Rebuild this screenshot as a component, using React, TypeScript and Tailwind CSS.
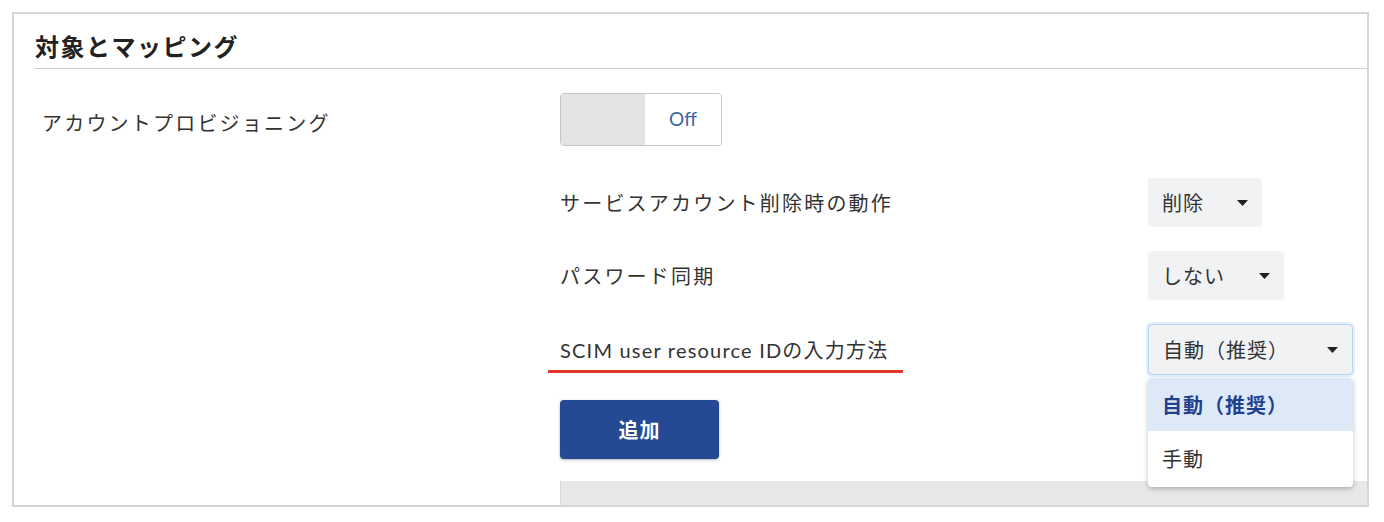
const jp = { fontFamily: '"Lato", "Noto Sans CJK JP", sans-serif' };

function Caret() {
  return (
    <svg width="11" height="6" viewBox="0 0 11 6" className="shrink-0">
      <path d="M0 0h11L5.5 6z" fill="#222" />
    </svg>
  );
}

function Select({ value, width, focused }: { value: string; width: string; focused?: boolean }) {
  return (
    <div
      className={`flex items-center justify-between rounded-[4px] bg-[#f1f2f4] pl-[14px] pr-[14px] text-[20px] tracking-[1px] text-[#333] ${width} ${
        focused ? "h-[51px] border border-[#b5d4f4] shadow-[0_0_0_2px_#e3effc]" : "h-[49px]"
      }`}
    >
      <span>{value}</span>
      <Caret />
    </div>
  );
}

export default function App() {
  return (
    <div className="h-[522px] w-[1384px] bg-white pl-[12px] pr-[15px] pt-[12px]" style={jp}>
      <div className="flex h-[495px] flex-col overflow-hidden border-2 border-[#d6d6d6]">
        <div className="ml-[21px] border-b border-[#c9ced8] pb-[6px] pt-[18px]">
          <h2 className="text-[24px] font-bold leading-[30px] tracking-[1.5px] text-[#222]">対象とマッピング</h2>
        </div>

        <div className="flex min-h-0 flex-1">
          <div className="w-[546px] shrink-0 pl-[28px] pt-[27px]">
            <p className="flex h-[53px] items-center text-[20px] tracking-[2.2px] text-[#333]">アカウントプロビジョニング</p>
          </div>

          <div className="flex min-w-0 flex-1 flex-col pt-[24px]">
            <div className="flex h-[53px] w-[162px] overflow-hidden rounded-[4px] border border-[#c6c6c6]">
              <div className="w-[84px] bg-[#e3e3e3]" />
              <div className="flex flex-1 items-center justify-center bg-white text-[19px] text-[#3a63a8]">Off</div>
            </div>

            <div className="mt-[32px] grid grid-cols-[588px_auto] items-center gap-y-[24px]">
              <p className="text-[20px] tracking-[2.2px] text-[#333]">サービスアカウント削除時の動作</p>
              <Select value="削除" width="w-[114px]" />

              <p className="text-[20px] tracking-[2.2px] text-[#333]">パスワード同期</p>
              <Select value="しない" width="w-[136px]" />

              <div className="relative flex h-[51px] items-center">
                <p className="text-[20px] tracking-[1.2px] text-[#333]">SCIM user resource IDの入力方法</p>
                <div className="absolute left-[-12px] top-[46px] h-[3px] w-[355px] bg-[#e2372a]" />
              </div>
              <div className="relative z-10">
                <Select value="自動（推奨）" width="w-[205px]" focused />
                <div className="absolute left-0 top-[54px] w-[205px] overflow-hidden rounded-[4px] bg-white shadow-[0_2px_5px_rgba(0,0,0,0.25)]">
                  <div className="flex h-[53px] items-center bg-[#dde9f7] px-[14px] text-[20px] font-bold tracking-[1px] text-[#1f3f8f]">
                    自動（推奨）
                  </div>
                  <div className="flex h-[56px] items-center px-[14px] text-[20px] tracking-[1px] text-[#333]">手動</div>
                </div>
              </div>
            </div>

            <button className="mt-[25px] h-[59px] w-[159px] rounded-[4px] bg-[#234a93] text-[20px] font-bold tracking-[1px] text-white shadow-[0_1px_3px_rgba(0,0,0,0.3)]">
              追加
            </button>

            <div className="mt-[22px] flex-1 border-l border-[#d6d6d6] bg-[#e8e8e8]" />
          </div>
        </div>
      </div>
    </div>
  );
}
